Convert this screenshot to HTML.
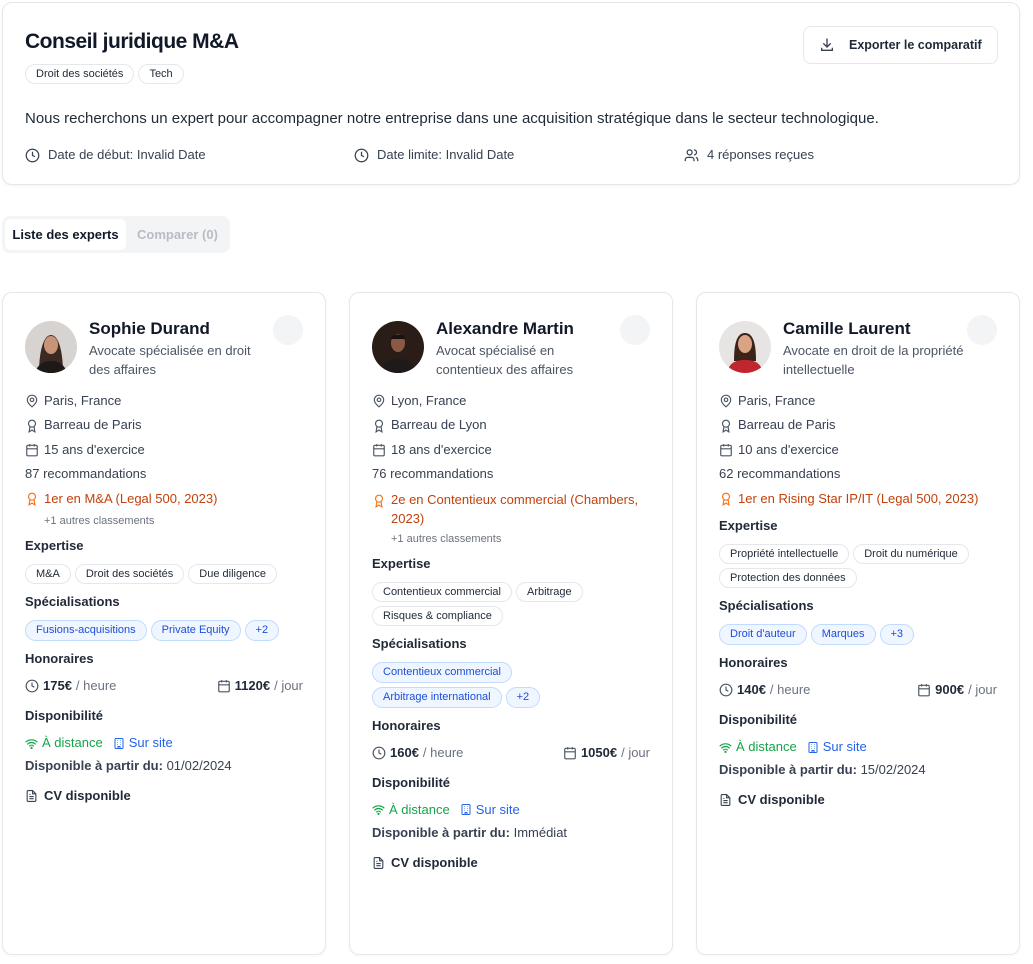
<!DOCTYPE html>
<html><head><meta charset="utf-8"><style>
*{box-sizing:border-box;margin:0;padding:0}
body{width:1033px;height:964px;background:#fff;font-family:"Liberation Sans","DejaVu Sans",sans-serif;color:#1f2937;position:relative;overflow:hidden}
.hdr{position:absolute;left:2px;top:2px;width:1018px;height:183px;border:1px solid #e5e7eb;border-radius:10px;box-shadow:0 1px 3px rgba(0,0,0,.05)}
.title{position:absolute;left:22px;top:27px;font-size:21px;font-weight:bold;color:#111827;letter-spacing:-.5px}
.tag{display:inline-block;height:20px;line-height:18px;padding:0 10px;border:1px solid #e5e7eb;border-radius:10px;font-size:11px;color:#1f2937;background:#fff;margin-right:4px;white-space:nowrap}
.btn{position:absolute;left:800px;top:23px;width:195px;height:38px;border:1px solid #e5e7eb;border-radius:8px;font-size:12.5px;font-weight:bold;color:#1f2937;line-height:36px;padding-left:45px}
.btn svg{position:absolute;left:15px;top:10px}
.meta{position:absolute;top:142px;font-size:13px;color:#374151;display:flex;align-items:center;gap:8px;line-height:20px}
.tabs{position:absolute;left:2px;top:216px;width:228px;height:37px;background:#f3f4f6;border-radius:8px}
.tab1{position:absolute;left:3px;top:3px;width:121px;height:31px;background:#fff;border-radius:6px;font-size:13px;font-weight:bold;line-height:31px;text-align:center;color:#111827}
.tab2{position:absolute;left:135px;top:3px;font-size:13px;font-weight:bold;line-height:31px;color:#b8bcc4}
.card{position:absolute;top:292px;width:324px;height:663px;border:1px solid #e5e7eb;border-radius:10px;padding:26px 22px 0 22px;box-shadow:0 1px 3px rgba(0,0,0,.04)}
.chk{position:absolute;right:22px;top:22px;width:30px;height:30px;border-radius:50%;background:#f3f4f6}
.head{display:flex;gap:12px;height:62px}
.av{width:52px;height:52px;border-radius:50%;overflow:hidden;flex:none;margin-top:2px}
.name{font-size:17px;font-weight:bold;color:#111827;line-height:20px}
.sub{font-size:13px;color:#4b5563;line-height:19px;margin-top:2px;width:196px}
.row{font-size:13px;color:#374151;line-height:24.4px;display:flex;align-items:center;gap:5px}
.rank{color:#c2410c;align-items:flex-start}
.rank svg{margin-top:5px}
.more{font-size:11px;color:#6b7280;line-height:20px;padding-left:19px}
.h{font-size:13px;font-weight:bold;color:#1f2937;line-height:20px;margin-top:5px}
.tags{margin-top:8px;display:flex;flex-wrap:wrap;gap:4px 4px;margin-bottom:8px}
.tags .tag{margin:0}
.b{display:inline-block;height:21px;line-height:19px;padding:0 10px;border:1px solid #bfdbfe;background:#eff6ff;color:#1d4ed8;border-radius:11px;font-size:11px;white-space:nowrap}
.fees{display:flex;justify-content:space-between;font-size:13px;line-height:22px;margin-top:6px;margin-bottom:9px;color:#6b7280}
.fees span{display:flex;align-items:center;gap:4px}
.fees b{color:#1f2937}
.avail{display:flex;gap:10px;font-size:13px;line-height:20px;margin-top:7px}
.dispo{font-size:13px;line-height:20px;margin-top:3px;color:#374151}
.dispo b{color:#374151}
.cv{display:flex;align-items:center;gap:6px;font-size:13px;font-weight:bold;line-height:20px;margin-top:10px}
svg{flex:none}
</style></head><body>

<div class="hdr">
 <div class="title">Conseil juridique M&amp;A</div>
 <div style="position:absolute;left:22px;top:61px"><span class="tag">Droit des sociétés</span><span class="tag">Tech</span></div>
 <div class="btn"><svg width="16" height="16" viewBox="0 0 24 24" fill="none" stroke="#374151" stroke-width="2" stroke-linecap="round"><path d="M12 3v12M7 10l5 5 5-5M4 17v3h16v-3"/></svg>Exporter le comparatif</div>
 <div style="position:absolute;left:22px;top:105px;font-size:15px;color:#1f2937;line-height:22px">Nous recherchons un expert pour accompagner notre entreprise dans une acquisition stratégique dans le secteur technologique.</div>
 <div class="meta" style="left:22px"><svg width="15" height="15" viewBox="0 0 24 24" fill="none" stroke="#374151" stroke-width="2"><circle cx="12" cy="12" r="10"/><path d="M12 6v6l4 2"/></svg>Date de début: Invalid Date</div>
 <div class="meta" style="left:351px"><svg width="15" height="15" viewBox="0 0 24 24" fill="none" stroke="#374151" stroke-width="2"><circle cx="12" cy="12" r="10"/><path d="M12 6v6l4 2"/></svg>Date limite: Invalid Date</div>
 <div class="meta" style="left:681px"><svg width="15" height="15" viewBox="0 0 24 24" fill="none" stroke="#374151" stroke-width="2"><circle cx="9" cy="7" r="4"/><path d="M2 21v-2a4 4 0 0 1 4-4h6a4 4 0 0 1 4 4v2M16 3a4 4 0 0 1 0 8M22 21v-2a4 4 0 0 0-3-3.9"/></svg>4 réponses reçues</div>
</div>

<div class="tabs"><div class="tab1">Liste des experts</div><div class="tab2">Comparer (0)</div></div>

<div class="card" style="left:2px">
 <div class="chk"></div>
 <div class="head">
  <div class="av"><svg width="52" height="52" viewBox="0 0 52 52"><rect width="52" height="52" fill="#d6d3d1"/><path d="M14 52c0-20 4-38 12-38s12 18 12 38z" fill="#3b2a22"/><ellipse cx="26" cy="24" rx="7" ry="9" fill="#c89478"/><path d="M10 52c2-8 8-12 16-12s14 4 16 12z" fill="#1c1917"/></svg></div>
  <div><div class="name">Sophie Durand</div><div class="sub" style="width:180px">Avocate spécialisée en droit des affaires</div></div>
 </div>
 <div style="margin-top:8px">
  <div class="row"><svg width="14" height="14" viewBox="0 0 24 24" fill="none" stroke="#4b5563" stroke-width="2"><path d="M20 10c0 6-8 12-8 12s-8-6-8-12a8 8 0 0 1 16 0z"/><circle cx="12" cy="10" r="3"/></svg>Paris, France</div>
  <div class="row"><svg width="14" height="14" viewBox="0 0 24 24" fill="none" stroke="#4b5563" stroke-width="2"><circle cx="12" cy="8" r="6"/><path d="M15.5 13 17 22l-5-3-5 3 1.5-9"/></svg>Barreau de Paris</div>
  <div class="row"><svg width="14" height="14" viewBox="0 0 24 24" fill="none" stroke="#4b5563" stroke-width="2"><rect x="3" y="4" width="18" height="18" rx="2"/><path d="M16 2v4M8 2v4M3 10h18"/></svg>15 ans d'exercice</div>
  <div class="row">87 recommandations</div>
  <div class="row rank"><svg width="14" height="14" viewBox="0 0 24 24" fill="none" stroke="#f97316" stroke-width="2"><circle cx="12" cy="8" r="6"/><path d="M15.5 13 17 22l-5-3-5 3 1.5-9"/></svg>1er en M&amp;A (Legal 500, 2023)</div>
  <div class="more">+1 autres classements</div>
 </div>
 <div class="h">Expertise</div>
 <div class="tags"><span class="tag">M&amp;A</span><span class="tag">Droit des sociétés</span><span class="tag">Due diligence</span></div>
 <div class="h">Spécialisations</div>
 <div class="tags"><span class="b">Fusions-acquisitions</span><span class="b">Private Equity</span><span class="b">+2</span></div>
 <div class="h">Honoraires</div>
 <div class="fees"><span><svg width="14" height="14" viewBox="0 0 24 24" fill="none" stroke="#4b5563" stroke-width="2"><circle cx="12" cy="12" r="10"/><path d="M12 6v6l4 2"/></svg><b>175€</b> / heure</span><span><svg width="14" height="14" viewBox="0 0 24 24" fill="none" stroke="#4b5563" stroke-width="2"><rect x="3" y="4" width="18" height="18" rx="2"/><path d="M16 2v4M8 2v4M3 10h18"/></svg><b>1120€</b> / jour</span></div>
 <div class="h">Disponibilité</div>
 <div class="avail"><span style="color:#16a34a;display:flex;align-items:center;gap:4px"><svg width="13" height="13" viewBox="0 0 24 24" fill="none" stroke="#16a34a" stroke-width="2.2" stroke-linecap="round"><path d="M2 9a15 15 0 0 1 20 0M5 13a10 10 0 0 1 14 0M8.5 16.5a5 5 0 0 1 7 0"/><circle cx="12" cy="20" r="1"/></svg>À distance</span><span style="color:#2563eb;display:flex;align-items:center;gap:4px"><svg width="12" height="13" viewBox="0 0 24 24" fill="none" stroke="#2563eb" stroke-width="2"><rect x="4" y="2" width="16" height="20" rx="2"/><path d="M9 6h1M14 6h1M9 10h1M14 10h1M9 14h1M14 14h1M10 22v-4h4v4"/></svg>Sur site</span></div>
 <div class="dispo"><b>Disponible à partir du:</b> 01/02/2024</div>
 <div class="cv"><svg width="13" height="14" viewBox="0 0 24 24" fill="none" stroke="#374151" stroke-width="2"><path d="M14 2H6a2 2 0 0 0-2 2v16a2 2 0 0 0 2 2h12a2 2 0 0 0 2-2V8z"/><path d="M14 2v6h6M8 13h8M8 17h8M8 9h2"/></svg>CV disponible</div>
</div>

<div class="card" style="left:349px">
 <div class="chk"></div>
 <div class="head">
  <div class="av"><svg width="52" height="52" viewBox="0 0 52 52"><rect width="52" height="52" fill="#2a1d18"/><ellipse cx="26" cy="22" rx="7" ry="9" fill="#8a5a44"/><path d="M19 18c0-6 14-6 14 0" fill="#1a1210"/><path d="M8 52c2-10 8-14 18-14s16 4 18 14z" fill="#1f1a1a"/></svg></div>
  <div><div class="name">Alexandre Martin</div><div class="sub" style="width:170px">Avocat spécialisé en contentieux des affaires</div></div>
 </div>
 <div style="margin-top:8px">
  <div class="row"><svg width="14" height="14" viewBox="0 0 24 24" fill="none" stroke="#4b5563" stroke-width="2"><path d="M20 10c0 6-8 12-8 12s-8-6-8-12a8 8 0 0 1 16 0z"/><circle cx="12" cy="10" r="3"/></svg>Lyon, France</div>
  <div class="row"><svg width="14" height="14" viewBox="0 0 24 24" fill="none" stroke="#4b5563" stroke-width="2"><circle cx="12" cy="8" r="6"/><path d="M15.5 13 17 22l-5-3-5 3 1.5-9"/></svg>Barreau de Lyon</div>
  <div class="row"><svg width="14" height="14" viewBox="0 0 24 24" fill="none" stroke="#4b5563" stroke-width="2"><rect x="3" y="4" width="18" height="18" rx="2"/><path d="M16 2v4M8 2v4M3 10h18"/></svg>18 ans d'exercice</div>
  <div class="row">76 recommandations</div>
  <div class="row rank" style="line-height:19px;padding-top:3px;padding-bottom:1px"><svg width="14" height="14" viewBox="0 0 24 24" fill="none" stroke="#f97316" stroke-width="2" style="margin-top:4px"><circle cx="12" cy="8" r="6"/><path d="M15.5 13 17 22l-5-3-5 3 1.5-9"/></svg><span>2e en Contentieux commercial (Chambers, 2023)</span></div>
  <div class="more">+1 autres classements</div>
 </div>
 <div class="h">Expertise</div>
 <div class="tags"><span class="tag">Contentieux commercial</span><span class="tag">Arbitrage</span><span class="tag">Risques &amp; compliance</span></div>
 <div class="h">Spécialisations</div>
 <div class="tags"><span class="b">Contentieux commercial</span><span class="b" style="margin-right:60px">Arbitrage international</span><span class="b" style="margin-left:-60px">+2</span></div>
 <div class="h">Honoraires</div>
 <div class="fees"><span><svg width="14" height="14" viewBox="0 0 24 24" fill="none" stroke="#4b5563" stroke-width="2"><circle cx="12" cy="12" r="10"/><path d="M12 6v6l4 2"/></svg><b>160€</b> / heure</span><span><svg width="14" height="14" viewBox="0 0 24 24" fill="none" stroke="#4b5563" stroke-width="2"><rect x="3" y="4" width="18" height="18" rx="2"/><path d="M16 2v4M8 2v4M3 10h18"/></svg><b>1050€</b> / jour</span></div>
 <div class="h">Disponibilité</div>
 <div class="avail"><span style="color:#16a34a;display:flex;align-items:center;gap:4px"><svg width="13" height="13" viewBox="0 0 24 24" fill="none" stroke="#16a34a" stroke-width="2.2" stroke-linecap="round"><path d="M2 9a15 15 0 0 1 20 0M5 13a10 10 0 0 1 14 0M8.5 16.5a5 5 0 0 1 7 0"/><circle cx="12" cy="20" r="1"/></svg>À distance</span><span style="color:#2563eb;display:flex;align-items:center;gap:4px"><svg width="12" height="13" viewBox="0 0 24 24" fill="none" stroke="#2563eb" stroke-width="2"><rect x="4" y="2" width="16" height="20" rx="2"/><path d="M9 6h1M14 6h1M9 10h1M14 10h1M9 14h1M14 14h1M10 22v-4h4v4"/></svg>Sur site</span></div>
 <div class="dispo"><b>Disponible à partir du:</b> Immédiat</div>
 <div class="cv"><svg width="13" height="14" viewBox="0 0 24 24" fill="none" stroke="#374151" stroke-width="2"><path d="M14 2H6a2 2 0 0 0-2 2v16a2 2 0 0 0 2 2h12a2 2 0 0 0 2-2V8z"/><path d="M14 2v6h6M8 13h8M8 17h8M8 9h2"/></svg>CV disponible</div>
</div>

<div class="card" style="left:696px">
 <div class="chk"></div>
 <div class="head">
  <div class="av"><svg width="52" height="52" viewBox="0 0 52 52"><rect width="52" height="52" fill="#e7e5e4"/><path d="M15 40c0-18 3-28 11-28s11 10 11 28z" fill="#3a2318"/><ellipse cx="26" cy="23" rx="7" ry="9" fill="#d9a384"/><path d="M8 52c2-10 8-13 18-13s16 3 18 13z" fill="#c0262d"/></svg></div>
  <div><div class="name">Camille Laurent</div><div class="sub" style="width:205px">Avocate en droit de la propriété intellectuelle</div></div>
 </div>
 <div style="margin-top:8px">
  <div class="row"><svg width="14" height="14" viewBox="0 0 24 24" fill="none" stroke="#4b5563" stroke-width="2"><path d="M20 10c0 6-8 12-8 12s-8-6-8-12a8 8 0 0 1 16 0z"/><circle cx="12" cy="10" r="3"/></svg>Paris, France</div>
  <div class="row"><svg width="14" height="14" viewBox="0 0 24 24" fill="none" stroke="#4b5563" stroke-width="2"><circle cx="12" cy="8" r="6"/><path d="M15.5 13 17 22l-5-3-5 3 1.5-9"/></svg>Barreau de Paris</div>
  <div class="row"><svg width="14" height="14" viewBox="0 0 24 24" fill="none" stroke="#4b5563" stroke-width="2"><rect x="3" y="4" width="18" height="18" rx="2"/><path d="M16 2v4M8 2v4M3 10h18"/></svg>10 ans d'exercice</div>
  <div class="row">62 recommandations</div>
  <div class="row rank"><svg width="14" height="14" viewBox="0 0 24 24" fill="none" stroke="#f97316" stroke-width="2"><circle cx="12" cy="8" r="6"/><path d="M15.5 13 17 22l-5-3-5 3 1.5-9"/></svg>1er en Rising Star IP/IT (Legal 500, 2023)</div>
 </div>
 <div class="h" style="margin-top:5px">Expertise</div>
 <div class="tags"><span class="tag">Propriété intellectuelle</span><span class="tag">Droit du numérique</span><span class="tag">Protection des données</span></div>
 <div class="h">Spécialisations</div>
 <div class="tags"><span class="b">Droit d'auteur</span><span class="b">Marques</span><span class="b">+3</span></div>
 <div class="h">Honoraires</div>
 <div class="fees"><span><svg width="14" height="14" viewBox="0 0 24 24" fill="none" stroke="#4b5563" stroke-width="2"><circle cx="12" cy="12" r="10"/><path d="M12 6v6l4 2"/></svg><b>140€</b> / heure</span><span><svg width="14" height="14" viewBox="0 0 24 24" fill="none" stroke="#4b5563" stroke-width="2"><rect x="3" y="4" width="18" height="18" rx="2"/><path d="M16 2v4M8 2v4M3 10h18"/></svg><b>900€</b> / jour</span></div>
 <div class="h">Disponibilité</div>
 <div class="avail"><span style="color:#16a34a;display:flex;align-items:center;gap:4px"><svg width="13" height="13" viewBox="0 0 24 24" fill="none" stroke="#16a34a" stroke-width="2.2" stroke-linecap="round"><path d="M2 9a15 15 0 0 1 20 0M5 13a10 10 0 0 1 14 0M8.5 16.5a5 5 0 0 1 7 0"/><circle cx="12" cy="20" r="1"/></svg>À distance</span><span style="color:#2563eb;display:flex;align-items:center;gap:4px"><svg width="12" height="13" viewBox="0 0 24 24" fill="none" stroke="#2563eb" stroke-width="2"><rect x="4" y="2" width="16" height="20" rx="2"/><path d="M9 6h1M14 6h1M9 10h1M14 10h1M9 14h1M14 14h1M10 22v-4h4v4"/></svg>Sur site</span></div>
 <div class="dispo"><b>Disponible à partir du:</b> 15/02/2024</div>
 <div class="cv"><svg width="13" height="14" viewBox="0 0 24 24" fill="none" stroke="#374151" stroke-width="2"><path d="M14 2H6a2 2 0 0 0-2 2v16a2 2 0 0 0 2 2h12a2 2 0 0 0 2-2V8z"/><path d="M14 2v6h6M8 13h8M8 17h8M8 9h2"/></svg>CV disponible</div>
</div>

</body></html>
